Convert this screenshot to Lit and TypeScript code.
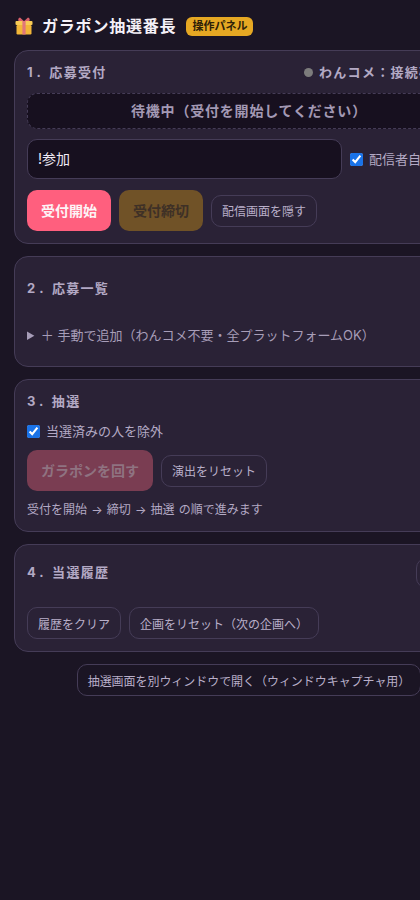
import { LitElement, html, css } from "lit";
import { customElement } from "lit/decorators.js";

@customElement("app-root")
export class AppRoot extends LitElement {
  static styles = css`
    :host {
      display: block;
      width: 420px;
      height: 900px;
      overflow: hidden;
      background: #1b1524;
      color: #e8e2f0;
      font-family: Inter, "Noto Sans CJK JP", "Noto Sans", sans-serif;
    }
    * { box-sizing: border-box; }
    .page {
      width: 498px;
      padding: 14px;
      display: flex;
      flex-direction: column;
      gap: 12px;
    }
    .head {
      display: flex;
      align-items: center;
      gap: 10px;
      height: 24px;
    }
    .gift { width: 20px; height: 20px; flex: none; margin-right: -2px; }
    h1 {
      margin: 0;
      font-size: 16px;
      line-height: 24px;
      font-weight: 700;
      letter-spacing: 0.8px;
      color: #f5f1f8;
    }
    .badge {
      background: #e6a823;
      color: #2e2108;
      font-size: 11px;
      line-height: 19px;
      font-weight: 700;
      padding: 0 6px;
      border-radius: 6px;
    }
    .card {
      background: #2a2236;
      border: 1px solid #453c57;
      border-radius: 14px;
      padding: 12px;
      display: flex;
      flex-direction: column;
    }
    .row { display: flex; align-items: center; gap: 8px; }
    .between { display: flex; align-items: center; justify-content: space-between; }
    h2 {
      margin: 0;
      font-size: 13px;
      line-height: 18px;
      font-weight: 700;
      letter-spacing: 1.3px;
      color: #b3a9c4;
    }
    h2 .n { letter-spacing: 4px; }
    .status {
      display: flex;
      align-items: center;
      gap: 6px;
      font-size: 13px;
      line-height: 18px;
      font-weight: 700;
      letter-spacing: 1.3px;
      color: #b3a9c4;
      padding-right: 9px;
    }
    .dot { width: 9px; height: 9px; border-radius: 50%; background: #7c7c7c; }
    .state {
      margin-top: 12px;
      height: 36px;
      padding-bottom: 2px;
      border: 1px dashed #453c57;
      border-radius: 10px;
      background: #17101f;
      color: #a399b4;
      font-size: 14px;
      font-weight: 700;
      letter-spacing: 0.8px;
      display: flex;
      align-items: center;
      justify-content: center;
    }
    .inp {
      flex: 0 0 315px;
      height: 40px;
      border: 1px solid #453c57;
      border-radius: 10px;
      background: #17101f;
      color: #f0ebf5;
      font: 400 14px Inter, "Noto Sans CJK JP", sans-serif;
      padding: 0 10px 2px;
      outline: none;
    }
    .check {
      display: flex;
      align-items: center;
      gap: 6px;
      font-size: 13px;
      line-height: 18px;
      color: #b3a9c4;
      white-space: nowrap;
    }
    .check input { width: 13px; height: 13px; margin: 1px 0 0; accent-color: #1a73e8; }
    button {
      font-family: inherit;
      cursor: pointer;
      white-space: nowrap;
    }
    .big {
      height: 41px;
      border: 0;
      border-radius: 10px;
      padding: 0 14px 2px;
      font-size: 14px;
      font-weight: 700;
    }
    .pink { background: #ff5f7e; color: #fdf3f6; }
    .amber { background: #705227; color: #3e3026; }
    .spin { background: #7a3d52; color: #8f7381; }
    .ghost {
      height: 32px;
      border: 1px solid #453c57;
      border-radius: 10px;
      background: transparent;
      color: #b9afc9;
      font-size: 12px;
      padding: 0 10px;
    }
    .r1 { margin-top: 10px; }
    .r2 { margin-top: 11px; }
    .r3 { margin-top: 10px; }
    .list-head { height: 38px; display: flex; align-items: center; }
    details { margin-top: 18px; margin-bottom: 9px; font-size: 13px; color: #a79db8; line-height: 20px; }
    summary { cursor: pointer; }
    .c3 .title { margin-bottom: 12px; }
    .c3 .note { margin-top: 10px; font-size: 12px; line-height: 18px; color: #b3a9c4; word-spacing: 0.8px; }
    .c4 .top { height: 30px; }
    .c4 .r { margin-top: 20px; }
    .mini { height: 30px; padding: 0 8.5px; margin-top: 1px; }
    .foot { display: flex; justify-content: center; }
    .foot .ghost { letter-spacing: -0.05px; }
  `;

  render() {
    return html`
      <div class="page">
        <div class="head">
          <svg class="gift" viewBox="0 0 20 20">
            <path d="M6 1.5 9.8 5 5 5.4C3.6 4 4.4 1.8 6 1.5ZM14 1.5 10.2 5 15 5.4C16.4 4 15.6 1.8 14 1.5Z" fill="#d8606a"/>
            <rect x="1.5" y="5" width="17" height="4" rx="1" fill="#f8cb55"/>
            <rect x="2.5" y="9" width="15" height="9.5" rx="1.2" fill="#f2b638"/>
            <rect x="8.4" y="5" width="3.2" height="13.5" fill="#e2767a"/>
          </svg>
          <h1>ガラポン抽選番長</h1>
          <span class="badge">操作パネル</span>
        </div>

        <section class="card">
          <div class="between">
            <h2><span class="n">1.</span> 応募受付</h2>
            <span class="status"><i class="dot"></i>わんコメ：接続確認中</span>
          </div>
          <div class="state">待機中（受付を開始してください）</div>
          <div class="row r1">
            <input class="inp" .value=${"!参加"} />
            <label class="check"><input type="checkbox" checked />配信者自身を除外</label>
          </div>
          <div class="row r2">
            <button class="big pink">受付開始</button>
            <button class="big amber">受付締切</button>
            <button class="ghost">配信画面を隠す</button>
          </div>
        </section>

        <section class="card">
          <div class="list-head"><h2><span class="n">2.</span> 応募一覧</h2></div>
          <details><summary>＋ 手動で追加（わんコメ不要・全プラットフォームOK）</summary></details>
        </section>

        <section class="card c3">
          <div class="title"><h2><span class="n">3.</span> 抽選</h2></div>
          <label class="check"><input type="checkbox" checked />当選済みの人を除外</label>
          <div class="row r3">
            <button class="big spin" disabled>ガラポンを回す</button>
            <button class="ghost">演出をリセット</button>
          </div>
          <div class="note">受付を開始 → 締切 → 抽選 の順で進みます</div>
        </section>

        <section class="card c4">
          <div class="between top">
            <h2><span class="n">4.</span> 当選履歴</h2>
            <button class="ghost mini">コピー</button>
          </div>
          <div class="row r">
            <button class="ghost">履歴をクリア</button>
            <button class="ghost">企画をリセット（次の企画へ）</button>
          </div>
        </section>

        <div class="foot"><button class="ghost">抽選画面を別ウィンドウで開く（ウィンドウキャプチャ用）</button></div>
      </div>
    `;
  }
}
